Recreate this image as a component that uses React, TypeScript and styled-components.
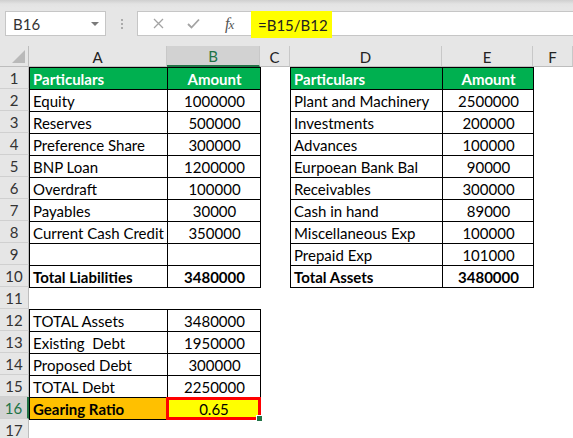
import React from "react";
import styled, { createGlobalStyle } from "styled-components";

const GlobalStyle = createGlobalStyle`
  html, body {
    margin: 0;
    padding: 0;
    background: #ffffff;
  }
  body {
    font-family: Lato, "Open Sans", "Liberation Sans", sans-serif;
  }
`;

const GREEN = "#217346";

const Frame = styled.div`
  width: 573px;
  height: 438px;
  overflow: hidden;
  background: #e6e6e6;
  display: flex;
  flex-direction: column;
`;

const Toolbar = styled.div`
  height: 46px;
  flex: none;
  display: flex;
  align-items: flex-start;
  padding: 11px 0 0 5px;
  box-sizing: border-box;
  background: linear-gradient(#cfcfcf 0px, #e3e3e3 4px, #e6e6e6 8px);
`;

const NameBox = styled.div`
  width: 101px;
  height: 25px;
  box-sizing: border-box;
  background: #fff;
  border: 1px solid #c6c6c6;
  display: flex;
  align-items: center;
  justify-content: space-between;
  padding: 0 6px 0 7px;
  font-size: 15px;
  color: #333;
`;

const Caret = styled.span`
  width: 0;
  height: 0;
  border-left: 4px solid transparent;
  border-right: 4px solid transparent;
  border-top: 4px solid #7a7a7a;
`;

const Grip = styled.div`
  width: 31px;
  height: 25px;
  display: flex;
  flex-direction: column;
  align-items: center;
  justify-content: center;
  gap: 2px;
  span {
    width: 2px;
    height: 2px;
    background: #ababab;
  }
`;

const FormulaBar = styled.div`
  flex: 1;
  height: 25px;
  box-sizing: border-box;
  background: #fff;
  border: 1px solid #c6c6c6;
  border-right: none;
  display: flex;
  align-items: flex-start;
`;

const FxButtons = styled.div`
  width: 110px;
  height: 23px;
  display: flex;
  align-items: center;
  padding-left: 14px;
  box-sizing: border-box;
`;

const FxIcon = styled.span<{ $w: number }>`
  width: ${(p) => p.$w}px;
  display: flex;
  align-items: center;
  justify-content: center;
`;

const FxLabel = styled.span`
  font-family: "Liberation Serif", serif;
  font-style: italic;
  font-size: 16px;
  color: #555;
  letter-spacing: -1px;
  small {
    font-size: 13px;
  }
`;

const FormulaInput = styled.div`
  flex: 1;
  display: flex;
  align-items: flex-start;
  padding-left: 3px;
`;

const Highlight = styled.div`
  margin-top: -1px;
  height: 27px;
  width: 81px;
  background: #ffff00;
  display: flex;
  align-items: center;
  padding-left: 7px;
  box-sizing: border-box;
  font-size: 15px;
  color: #222;
`;

const Sheet = styled.div`
  flex: 1;
  display: grid;
  grid-template-columns: 29px 138px 93px 30px 152px 91px 1fr;
  grid-template-rows: 21px repeat(17, 22px);
  background: #fff;
  font-size: 15px;
`;

const Corner = styled.div`
  background: #e6e6e6;
  border-right: 1px solid #bdbdbd;
  border-bottom: 1px solid #bdbdbd;
  box-sizing: border-box;
  position: relative;
  &::after {
    content: "";
    position: absolute;
    right: 3px;
    bottom: 3px;
    width: 0;
    height: 0;
    border-left: 13px solid transparent;
    border-bottom: 13px solid #b9b9b9;
  }
`;

const ColHeader = styled.div<{ $active?: boolean }>`
  background: ${(p) => (p.$active ? "#d2d2d2" : "#e6e6e6")};
  color: ${(p) => (p.$active ? GREEN : "#222")};
  border-right: 1px solid #c8c8c8;
  border-bottom: ${(p) => (p.$active ? `2px solid ${GREEN}` : "1px solid #bdbdbd")};
  box-sizing: border-box;
  display: flex;
  align-items: center;
  justify-content: center;
  padding-top: 1px;
`;

const RowHeader = styled.div<{ $active?: boolean }>`
  background: ${(p) => (p.$active ? "#d2d2d2" : "#e6e6e6")};
  color: ${(p) => (p.$active ? GREEN : "#333")};
  border-right: ${(p) => (p.$active ? `2px solid ${GREEN}` : "1px solid #bdbdbd")};
  border-bottom: 1px solid #d0d0d0;
  box-sizing: border-box;
  display: flex;
  align-items: center;
  justify-content: center;
  padding-top: 1px;
`;

const Cell = styled.div<{
  $boxed?: boolean;
  $bold?: boolean;
  $center?: boolean;
  $fill?: string;
  $ink?: string;
}>`
  box-sizing: border-box;
  display: flex;
  align-items: center;
  justify-content: ${(p) => (p.$center ? "center" : "flex-start")};
  padding: 1px 2px 0 3px;
  white-space: pre;
  overflow: visible;
  font-weight: ${(p) => (p.$bold ? 700 : 400)};
  color: ${(p) => p.$ink || "#000"};
  background: ${(p) => p.$fill || "transparent"};
  ${(p) =>
    p.$boxed &&
    `
    border: 1px solid #000;
    margin: 0 -1px -1px 0;
  `}
`;

const Selected = styled(Cell)`
  position: relative;
  z-index: 2;
  border: 3px solid #ff0000;
  margin: 0 -1px -1px -1px;
  background: #ffff00;
`;

const FillHandle = styled.span`
  position: absolute;
  right: -5px;
  bottom: -5px;
  width: 5px;
  height: 5px;
  background: ${GREEN};
  border: 1px solid #fff;
`;

type CellData = {
  text: string;
  bold?: boolean;
  center?: boolean;
  fill?: string;
  ink?: string;
};

const HEAD_GREEN = "#00b050";

const data: Record<string, CellData> = {};

const put = (col: string, row: number, text: string, opts: Partial<CellData> = {}) => {
  data[`${col}${row}`] = { text, ...opts };
};

const liabilities: [string, string][] = [
  ["Equity", "1000000"],
  ["Reserves", "500000"],
  ["Preference Share", "300000"],
  ["BNP Loan", "1200000"],
  ["Overdraft", "100000"],
  ["Payables", "30000"],
  ["Current Cash Credit", "350000"],
  ["", ""],
];

const assets: [string, string][] = [
  ["Plant and Machinery", "2500000"],
  ["Investments", "200000"],
  ["Advances", "100000"],
  ["Eurpoean Bank Bal", "90000"],
  ["Receivables", "300000"],
  ["Cash in hand", "89000"],
  ["Miscellaneous Exp", "100000"],
  ["Prepaid Exp", "101000"],
];

const ratio: [string, string][] = [
  ["TOTAL Assets", "3480000"],
  ["Existing  Debt", "1950000"],
  ["Proposed Debt", "300000"],
  ["TOTAL Debt", "2250000"],
];

// header rows
put("A", 1, "Particulars", { bold: true, fill: HEAD_GREEN, ink: "#fff" });
put("B", 1, "Amount", { bold: true, center: true, fill: HEAD_GREEN, ink: "#fff" });
put("D", 1, "Particulars", { bold: true, fill: HEAD_GREEN, ink: "#fff" });
put("E", 1, "Amount", { bold: true, center: true, fill: HEAD_GREEN, ink: "#fff" });

liabilities.forEach(([name, amt], i) => {
  put("A", i + 2, name);
  put("B", i + 2, amt, { center: true });
});
assets.forEach(([name, amt], i) => {
  put("D", i + 2, name);
  put("E", i + 2, amt, { center: true });
});
put("A", 10, "Total Liabilities", { bold: true });
put("B", 10, "3480000", { bold: true, center: true });
put("D", 10, "Total Assets", { bold: true });
put("E", 10, "3480000", { bold: true, center: true });

ratio.forEach(([name, amt], i) => {
  put("A", i + 12, name);
  put("B", i + 12, amt, { center: true });
});
put("A", 16, "Gearing Ratio", { bold: true, fill: "#ffc000" });

const COLS = ["A", "B", "C", "D", "E", "F"];
const ROWS = Array.from({ length: 17 }, (_, i) => i + 1);

const CrossIcon = () => (
  <svg width="11" height="11" viewBox="0 0 11 11">
    <path d="M1 1 L10 10 M10 1 L1 10" stroke="#a3a3a3" strokeWidth="1.3" fill="none" />
  </svg>
);

const CheckIcon = () => (
  <svg width="13" height="11" viewBox="0 0 13 11">
    <path d="M1 6 L4.5 9.5 L12 1.5" stroke="#a3a3a3" strokeWidth="1.8" fill="none" />
  </svg>
);

export default function App() {
  return (
    <>
      <GlobalStyle />
      <Frame>
        <Toolbar>
          <NameBox>
            B16
            <Caret />
          </NameBox>
          <Grip>
            <span />
            <span />
            <span />
          </Grip>
          <FormulaBar>
            <FxButtons>
              <FxIcon $w={12}>
                <CrossIcon />
              </FxIcon>
              <FxIcon $w={22} />
              <FxIcon $w={14}>
                <CheckIcon />
              </FxIcon>
              <FxIcon $w={25} />
              <FxLabel>
                f<small>x</small>
              </FxLabel>
            </FxButtons>
            <FormulaInput>
              <Highlight>=B15/B12</Highlight>
            </FormulaInput>
          </FormulaBar>
        </Toolbar>
        <Sheet>
          <Corner />
          {COLS.map((c) => (
            <ColHeader key={c} $active={c === "B"}>
              {c}
            </ColHeader>
          ))}
          {ROWS.map((r) => (
            <React.Fragment key={r}>
              <RowHeader $active={r === 16}>{r}</RowHeader>
              {COLS.map((c) => {
                const key = `${c}${r}`;
                if (key === "B16") {
                  return (
                    <Selected key={key} $center>
                      0.65
                      <FillHandle />
                    </Selected>
                  );
                }
                const d = data[key];
                return (
                  <Cell
                    key={key}
                    $boxed={!!d}
                    $bold={d?.bold}
                    $center={d?.center}
                    $fill={d?.fill}
                    $ink={d?.ink}
                  >
                    {d?.text}
                  </Cell>
                );
              })}
            </React.Fragment>
          ))}
        </Sheet>
      </Frame>
    </>
  );
}
